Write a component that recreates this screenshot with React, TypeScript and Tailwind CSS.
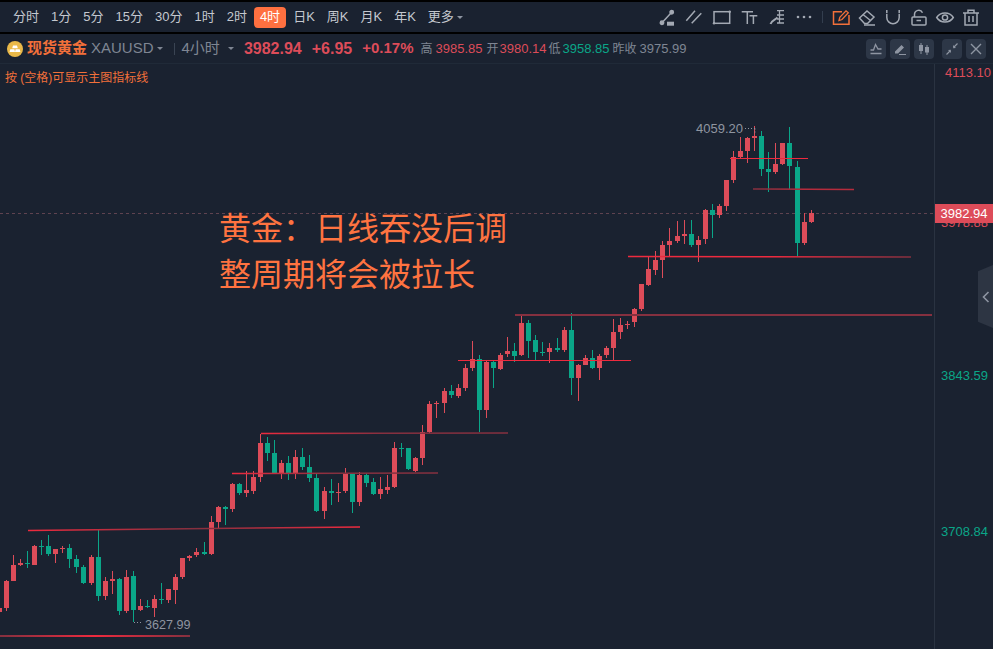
import type { ReactNode } from 'react'

const RED = '#dd4c59'
const GREEN = '#0aa688'

// [high, bodyTop, bodyBottom, low, colour], left to right, first candle is cut by the edge
const candles: [number, number, number, number, 'r' | 'g'][] = [
  [607, 608, 612, 612, 'r'],
  [580, 581, 608, 611, 'r'],
  [555, 565, 581, 581, 'r'],
  [559, 563, 565, 566, 'r'],
  [551, 563, 564, 568, 'g'],
  [545, 546, 565, 565, 'r'],
  [540, 546, 547, 555, 'g'],
  [535, 546, 554, 556, 'g'],
  [549, 549, 554, 563, 'r'],
  [546, 548, 549, 553, 'r'],
  [544, 548, 559, 568, 'g'],
  [555, 559, 567, 573, 'g'],
  [565, 567, 583, 584, 'g'],
  [555, 557, 583, 585, 'r'],
  [530, 557, 596, 601, 'g'],
  [577, 581, 596, 600, 'r'],
  [571, 579, 581, 594, 'r'],
  [578, 579, 611, 615, 'g'],
  [570, 577, 611, 613, 'r'],
  [571, 576, 610, 622, 'g'],
  [599, 606, 610, 611, 'r'],
  [600, 606, 607, 608, 'g'],
  [595, 599, 608, 617, 'r'],
  [583, 599, 600, 604, 'g'],
  [589, 589, 600, 603, 'r'],
  [574, 577, 590, 604, 'r'],
  [558, 558, 577, 579, 'r'],
  [555, 556, 558, 561, 'r'],
  [548, 552, 555, 557, 'r'],
  [542, 552, 554, 555, 'g'],
  [516, 522, 554, 555, 'r'],
  [506, 507, 522, 529, 'r'],
  [506, 507, 509, 525, 'g'],
  [483, 484, 509, 512, 'r'],
  [483, 484, 493, 495, 'g'],
  [471, 490, 493, 497, 'r'],
  [471, 477, 491, 494, 'r'],
  [434, 443, 477, 482, 'r'],
  [437, 443, 453, 461, 'g'],
  [440, 453, 473, 474, 'g'],
  [460, 463, 474, 479, 'r'],
  [456, 463, 473, 480, 'g'],
  [450, 457, 474, 479, 'r'],
  [448, 457, 467, 470, 'g'],
  [455, 467, 478, 482, 'g'],
  [474, 478, 511, 512, 'g'],
  [487, 491, 511, 519, 'r'],
  [479, 491, 493, 505, 'g'],
  [483, 492, 493, 502, 'r'],
  [468, 473, 491, 493, 'r'],
  [473, 473, 502, 513, 'g'],
  [472, 475, 502, 506, 'r'],
  [473, 475, 483, 487, 'g'],
  [478, 482, 494, 495, 'g'],
  [477, 489, 494, 499, 'r'],
  [475, 487, 490, 494, 'r'],
  [442, 448, 487, 488, 'r'],
  [443, 448, 449, 457, 'g'],
  [448, 448, 469, 470, 'g'],
  [457, 458, 471, 472, 'r'],
  [425, 432, 458, 465, 'r'],
  [401, 404, 432, 433, 'r'],
  [401, 403, 404, 418, 'r'],
  [388, 391, 403, 413, 'r'],
  [385, 391, 395, 398, 'g'],
  [384, 388, 396, 398, 'r'],
  [364, 368, 388, 391, 'r'],
  [341, 359, 368, 371, 'r'],
  [355, 359, 410, 432, 'g'],
  [361, 362, 410, 418, 'r'],
  [361, 362, 368, 388, 'g'],
  [353, 355, 369, 370, 'r'],
  [337, 351, 354, 357, 'r'],
  [343, 351, 356, 362, 'g'],
  [314, 323, 355, 356, 'r'],
  [320, 323, 341, 358, 'g'],
  [335, 340, 352, 360, 'g'],
  [342, 352, 353, 356, 'g'],
  [343, 348, 352, 363, 'r'],
  [338, 348, 350, 352, 'g'],
  [327, 330, 350, 352, 'r'],
  [313, 330, 378, 395, 'g'],
  [364, 365, 378, 401, 'r'],
  [355, 358, 365, 365, 'r'],
  [350, 358, 368, 369, 'g'],
  [354, 356, 368, 380, 'r'],
  [346, 348, 355, 358, 'r'],
  [319, 332, 348, 360, 'r'],
  [318, 325, 332, 339, 'r'],
  [321, 324, 325, 329, 'r'],
  [308, 309, 322, 327, 'r'],
  [284, 284, 309, 311, 'r'],
  [257, 269, 285, 286, 'r'],
  [251, 260, 270, 275, 'r'],
  [241, 245, 260, 278, 'r'],
  [228, 241, 245, 257, 'r'],
  [221, 236, 241, 243, 'r'],
  [220, 234, 236, 244, 'r'],
  [220, 234, 245, 247, 'g'],
  [236, 240, 245, 262, 'r'],
  [209, 210, 239, 244, 'r'],
  [204, 210, 215, 238, 'g'],
  [204, 206, 215, 218, 'r'],
  [180, 180, 206, 211, 'r'],
  [151, 157, 180, 183, 'r'],
  [137, 151, 157, 158, 'r'],
  [137, 138, 151, 163, 'r'],
  [126, 136, 138, 151, 'r'],
  [131, 136, 169, 176, 'g'],
  [152, 169, 172, 192, 'g'],
  [143, 164, 172, 174, 'r'],
  [143, 143, 164, 165, 'r'],
  [127, 143, 166, 189, 'g'],
  [161, 167, 243, 257, 'g'],
  [213, 222, 243, 245, 'r'],
  [210, 213, 222, 223, 'r'],
]

const BRIGHT = '#ee2a3e'
const DULL = '#85303f'

// support and resistance lines drawn on the chart
const lines = [
  { x1: 0, y1: 636, x2: 190, y2: 636, w: 2, from: DULL, mid: BRIGHT, to: DULL },
  { x1: 28, y1: 530.5, x2: 360, y2: 527, w: 1.5, from: BRIGHT, mid: DULL, to: BRIGHT },
  { x1: 232, y1: 473.5, x2: 438, y2: 473, w: 1.5, from: BRIGHT, mid: DULL, to: DULL },
  { x1: 261, y1: 433.5, x2: 508, y2: 433, w: 1.5, from: BRIGHT, mid: DULL, to: DULL },
  { x1: 458, y1: 360.5, x2: 631, y2: 360.5, w: 1, from: BRIGHT, mid: BRIGHT, to: BRIGHT },
  { x1: 515, y1: 315, x2: 932, y2: 315, w: 2, from: DULL, mid: DULL, to: DULL },
  { x1: 628, y1: 256.5, x2: 911, y2: 257, w: 1.5, from: BRIGHT, mid: BRIGHT, to: DULL },
  { x1: 753, y1: 189, x2: 854, y2: 189.5, w: 1.5, from: DULL, mid: '#b52b3c', to: '#b52b3c' },
  { x1: 730, y1: 158.5, x2: 808, y2: 158.5, w: 1, from: BRIGHT, mid: BRIGHT, to: BRIGHT },
]

const periods = ['分时', '1分', '5分', '15分', '30分', '1时', '2时', '4时', '日K', '周K', '月K', '年K']

function Glyph({ children }: { children: ReactNode }) {
  return (
    <svg
      viewBox="0 0 20 20"
      fill="none"
      stroke="currentColor"
      strokeWidth="1.5"
      className="h-5 w-5 shrink-0"
    >
      {children}
    </svg>
  )
}

function PanelButton({ children }: { children: ReactNode }) {
  return (
    <div className="flex h-5 w-5 items-center justify-center rounded-[4px] bg-[#2d3747] text-[#8e95a2]">
      {children}
    </div>
  )
}

function Chart() {
  return (
    <svg viewBox="0 64 934 585" className="absolute inset-0 h-full w-full">
      <defs>
        {lines.map((l, i) => (
          <linearGradient
            key={i}
            id={`line-${i}`}
            gradientUnits="userSpaceOnUse"
            x1={l.x1}
            y1="0"
            x2={l.x2}
            y2="0"
          >
            <stop offset="0" stopColor={l.from} />
            <stop offset="0.5" stopColor={l.mid} />
            <stop offset="1" stopColor={l.to} />
          </linearGradient>
        ))}
      </defs>

      <line x1="0" y1="213.5" x2="934" y2="213.5" stroke="#5f4350" strokeDasharray="3 3" />

      <g shapeRendering="crispEdges">
        {candles.map(([h, t, b, l, c], i) => {
          const x = Math.round(6.33 + 7.06 * (i - 1) - 2.5)
          const fill = c === 'r' ? RED : GREEN
          return (
            <g key={i} fill={fill}>
              <rect x={x + 2} y={h} width="1" height={l - h} />
              <rect x={x} y={t} width="5" height={Math.max(b - t, 1)} />
            </g>
          )
        })}
      </g>

      {lines.map((l, i) => (
        <line
          key={i}
          x1={l.x1}
          y1={l.y1}
          x2={l.x2}
          y2={l.y2}
          stroke={`url(#line-${i})`}
          strokeWidth={l.w}
        />
      ))}

      <path d="M745 128.5H755M755 128.5V134M134 622.5H143" stroke="#8f95a0" strokeDasharray="1 2" />
      <text x="696" y="133" fill="#8f95a0" fontSize="13">
        4059.20
      </text>
      <text x="145" y="629" fill="#8f95a0" fontSize="12.6">
        3627.99
      </text>
    </svg>
  )
}

export default function App() {
  return (
    <div className="h-[649px] w-full overflow-hidden bg-black pt-[2px] font-['Liberation_Sans','Noto_Sans_CJK_SC',sans-serif]">
      {/* Top toolbar */}
      <div className="flex h-[30px] items-center bg-[#1a2230] pl-[7px] pr-3 text-[13px] text-[#c4c8cf]">
        {periods.map((p) =>
          p === '4时' ? (
            <span
              key={p}
              className="mx-px flex h-[21px] items-center rounded-[4px] bg-[#ff7040] px-[6px] text-white"
            >
              {p}
            </span>
          ) : (
            <span key={p} className="px-[6px]">
              {p}
            </span>
          ),
        )}
        <span className="pl-[6px]">更多</span>
        <span className="ml-[3px] h-0 w-0 border-x-[3px] border-t-[3px] border-x-transparent border-t-[#8e95a2]" />

        <div className="ml-auto flex items-center text-[#a3a9b3]">
          <div className="flex items-center gap-[7.5px]">
            <Glyph>
              <path d="M5 15.7 14.7 5.3" />
              <circle cx="5" cy="15.7" r="1.7" fill="currentColor" />
              <circle cx="14.7" cy="5.3" r="1.7" fill="currentColor" />
              <rect x="10" y="14.7" width="7" height="4" fill="currentColor" stroke="none" />
            </Glyph>
            <Glyph>
              <path d="M2.3 13.7 11 3.7M7.7 16.3 17.3 6.3" />
            </Glyph>
            <Glyph>
              <rect x="2" y="4.7" width="15.7" height="11.6" />
              <circle cx="2" cy="16.3" r="1.2" fill="currentColor" stroke="none" />
              <circle cx="17.7" cy="4.7" r="1.2" fill="currentColor" stroke="none" />
            </Glyph>
            <Glyph>
              <path d="M2.7 4.7H14M8.3 4.7V17M10.5 8.7H18.3M14.4 8.7V17" />
            </Glyph>
            <Glyph>
              <path d="M10 3.7H17M10 8H17M10 12H17M10 16H17M12.5 3.7V16" strokeWidth="1.3" />
              <path d="M3.5 17C5 13 8 13 10.5 10.5" strokeWidth="2" />
            </Glyph>
            <Glyph>
              <circle cx="4" cy="10" r="1.3" fill="currentColor" stroke="none" />
              <circle cx="10" cy="10" r="1.3" fill="currentColor" stroke="none" />
              <circle cx="16" cy="10" r="1.3" fill="currentColor" stroke="none" />
            </Glyph>
          </div>

          <div className="mx-2 h-3 w-px bg-[#333e4e]" />

          <div className="flex items-center gap-[6px]">
            <svg viewBox="0 0 20 20" fill="none" className="h-5 w-5 shrink-0 text-[#f2703a]" stroke="currentColor" strokeWidth="1.5">
              <path d="M11 4.7H2.5V17.3H18V8" />
              <path d="M8 13.5 8.8 10.3 15 3.8 17.3 5.8 11 12.5Z" strokeWidth="1.3" />
            </svg>
            <Glyph>
              <path d="M2.5 11 10 4l7 6-6.5 6.5H7.5Z" />
              <path d="M6 7.5 13.5 13.5M7 18H18" />
            </Glyph>
            <Glyph>
              <path d="M3.8 3V10.5a6.2 6.2 0 0 0 12.4 0V3" />
              <path d="M2.5 6.5H5M15 6.5H17.5" strokeWidth="0.8" stroke="#1a2230" />
            </Glyph>
            <Glyph>
              <rect x="3" y="10" width="14" height="8" rx="1" />
              <path d="M5.5 10V7.5a4.2 4.2 0 0 1 8-1.8" />
              <path d="M7.5 13.5H12" />
            </Glyph>
            <Glyph>
              <path d="M1.7 10.5C5.5 4.5 14.5 4.5 18.3 10.5 14.5 16.5 5.5 16.5 1.7 10.5Z" />
              <circle cx="10" cy="10.5" r="2.6" />
            </Glyph>
            <Glyph>
              <path d="M2 6H18M7 5.5V3.2H13V5.5M4 6V18H16V6M8 9V15M12 9V15" />
            </Glyph>
          </div>
        </div>
      </div>

      {/* Symbol header */}
      <div className="mt-[2px] flex h-[30px] items-center border-b border-[#202a38] bg-[#1a2230] pl-[7px] pr-[7px] text-[#7f8693]">
        <svg viewBox="0 0 16 16" className="h-4 w-4 shrink-0">
          <circle cx="8" cy="8" r="8" fill="#e9b949" />
          <path d="M6 4.5H10L10.8 7.3H5.2ZM3.3 8.2H7.4L8 11H2.6ZM8.6 8.2H12.7L13.4 11H8Z" fill="#fff" />
        </svg>
        <span className="ml-1 text-[15px] font-bold text-[#f2703a]">现货黄金</span>
        <span className="ml-1 text-[15px]">XAUUSD</span>
        <span className="ml-[3px] h-0 w-0 border-x-[3px] border-t-[3px] border-x-transparent border-t-[#7f8693]" />
        <span className="ml-[11px] h-3 w-px bg-[#3a4453]" />
        <span className="ml-[7px] text-[15px]">4小时</span>
        <span className="ml-2 h-0 w-0 border-x-[3px] border-t-[3px] border-x-transparent border-t-[#7f8693]" />
        <span className="ml-[10px] text-base font-bold text-[#dd4c59]">3982.94</span>
        <span className="ml-[10px] text-base font-bold text-[#dd4c59]">+6.95</span>
        <span className="ml-[10px] text-[15px] font-bold text-[#dd4c59]">+0.17%</span>
        <span className="ml-[7px] text-xs">高</span>
        <span className="ml-[3px] text-[13px] text-[#dd4c59]">3985.85</span>
        <span className="ml-1 text-xs">开</span>
        <span className="ml-px text-[13px] text-[#dd4c59]">3980.14</span>
        <span className="ml-[2px] text-xs">低</span>
        <span className="ml-[2px] text-[13px] text-[#0aa688]">3958.85</span>
        <span className="ml-[3px] text-xs">昨收</span>
        <span className="ml-[3px] text-[13px]">3975.99</span>

        <div className="ml-auto flex items-center gap-2">
          <div className="flex items-center gap-1">
            <PanelButton>
              <svg viewBox="0 0 14 14" fill="none" stroke="currentColor" strokeWidth="1.3" className="h-[14px] w-[14px]">
                <path d="M1.5 8 4.5 8 6.5 2.5 9 7 12.5 7M1.5 11.5H12.5" />
              </svg>
            </PanelButton>
            <PanelButton>
              <svg viewBox="0 0 14 14" fill="currentColor" className="h-[14px] w-[14px]">
                <path d="M2 9.5 8.5 3 11 5.5 5 11.5H2ZM6 12H13V13H6Z" />
              </svg>
            </PanelButton>
            <PanelButton>
              <svg viewBox="0 0 14 14" fill="currentColor" className="h-[14px] w-[14px]">
                <path d="M3.5 1V3H2V9H3.5V12H4.5V9H6V3H4.5V1ZM9.5 3V5H8V10.5H9.5V13H10.5V10.5H12V5H10.5V3Z" />
              </svg>
            </PanelButton>
          </div>
          <div className="flex items-center gap-1">
            <PanelButton>
              <svg viewBox="0 0 14 14" fill="currentColor" className="h-[14px] w-[14px]">
                <path d="M8 3 11 6 8.2 6.2 8 3ZM6 11 3 8 5.8 7.8 6 11Z" />
                <path d="M9 5 12.5 1.5M5 9 1.5 12.5" stroke="currentColor" strokeWidth="1.2" />
              </svg>
            </PanelButton>
            <PanelButton>
              <svg viewBox="0 0 14 14" fill="none" stroke="currentColor" strokeWidth="1.4" className="h-[14px] w-[14px]">
                <path d="M2 2 12 12M12 2 2 12" />
              </svg>
            </PanelButton>
          </div>
        </div>
      </div>

      {/* Chart and price axis */}
      <div className="flex h-[585px] bg-[#1a2230]">
        <div className="relative w-[934px] shrink-0">
          <Chart />
          <p className="absolute left-[5px] top-[6px] text-xs text-[#f2703a]">按 (空格)可显示主图指标线</p>
          <div className="absolute left-[219px] top-[142px] text-[32px] leading-[46px] text-[#ff7340]">
            <p>黄金：日线吞没后调</p>
            <p>整周期将会被拉长</p>
          </div>
        </div>

        <div className="relative flex-1 border-l border-[#2a3341] text-[13px]">
          <span className="absolute left-[10px] top-[-1px] text-[#dd4c59]">4113.10</span>
          <span className="absolute left-[6px] top-[149px] text-[#dd4c59]">3978.88</span>
          <div className="absolute left-0 right-0 top-[140px] flex h-[19px] items-center justify-center bg-[#dd4c59] text-white">
            3982.94
          </div>
          <span className="absolute left-[6px] top-[302px] text-[#0aa688]">3843.59</span>
          <span className="absolute left-[6px] top-[458px] text-[#0aa688]">3708.84</span>
          <div className="absolute right-0 top-[201px] flex h-[63px] w-[15px] items-center justify-center bg-[#2d3543] [clip-path:polygon(0_10%,100%_0,100%_100%,0_90%)]">
            <svg viewBox="0 0 10 14" fill="none" stroke="#8e95a2" strokeWidth="1.6" className="h-[14px] w-[10px]">
              <path d="M7.5 2 2.5 7 7.5 12" />
            </svg>
          </div>
        </div>
      </div>
    </div>
  )
}
